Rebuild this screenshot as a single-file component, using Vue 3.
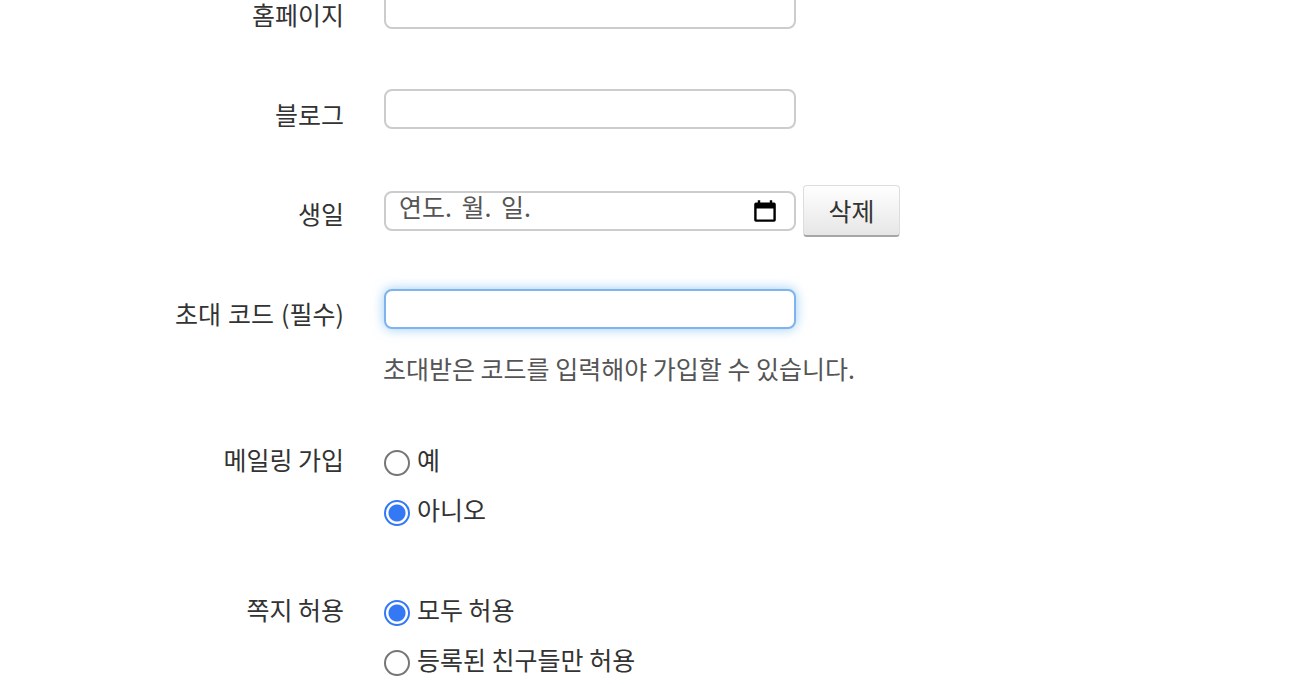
<script setup>
const calendarPath = 'M3 1h2v2h8V1h2v2h1.5A1.5 1.5 0 0 1 18 4.5v13a1.5 1.5 0 0 1-1.5 1.5h-15A1.5 1.5 0 0 1 0 17.5v-13A1.5 1.5 0 0 1 1.5 3H3V1zM2 8v9h14V8H2z'

const mailing = [
  { label: '예', checked: false },
  { label: '아니오', checked: true },
]
const messages = [
  { label: '모두 허용', checked: true },
  { label: '등록된 친구들만 허용', checked: false },
]
</script>

<template>
  <form class="signup" @submit.prevent>
    <div class="signup__row signup__row--first">
      <label class="signup__label">홈페이지</label>
      <div class="signup__field"><input class="signup__input" type="text" /></div>
    </div>

    <div class="signup__row signup__row--blog">
      <label class="signup__label">블로그</label>
      <div class="signup__field"><input class="signup__input" type="text" /></div>
    </div>

    <div class="signup__row signup__row--birthday">
      <label class="signup__label">생일</label>
      <div class="signup__field signup__field--inline">
        <div class="signup__date">
          <span>연도. 월. 일.</span>
          <svg class="signup__calendar" viewBox="0 0 18 20" width="22" height="24" aria-hidden="true">
            <path :d="calendarPath" fill-rule="evenodd" />
          </svg>
        </div>
        <button type="button" class="signup__button">삭제</button>
      </div>
    </div>

    <div class="signup__row signup__row--code">
      <label class="signup__label">초대 코드 (필수)</label>
      <div class="signup__field">
        <input class="signup__input signup__input--focus" type="text" />
        <p class="signup__help">초대받은 코드를 입력해야 가입할 수 있습니다.</p>
      </div>
    </div>

    <div class="signup__row signup__row--mailing">
      <label class="signup__label signup__label--radio">메일링 가입</label>
      <div class="signup__field signup__radios">
        <label v-for="item in mailing" :key="item.label" class="signup__radio">
          <input type="radio" name="mailing" :checked="item.checked" />
          <span>{{ item.label }}</span>
        </label>
      </div>
    </div>

    <div class="signup__row signup__row--messages">
      <label class="signup__label signup__label--radio">쪽지 허용</label>
      <div class="signup__field signup__radios">
        <label v-for="item in messages" :key="item.label" class="signup__radio">
          <input type="radio" name="messages" :checked="item.checked" />
          <span>{{ item.label }}</span>
        </label>
      </div>
    </div>
  </form>
</template>

<style>
html,
body {
  margin: 0;
  height: 684px;
  overflow: hidden;
  background: #fff;
}
</style>

<style scoped>
.signup {
  display: flex;
  flex-direction: column;
  margin-top: -11px;
  font-family: "Noto Sans CJK KR", "Liberation Sans", sans-serif;
  font-size: 25px;
  line-height: 40px;
  color: #333;
}

.signup__row {
  display: grid;
  grid-template-columns: 344px 1fr;
  column-gap: 40px;
}

.signup__row--blog {
  margin-top: 55px;
}

.signup__row--birthday {
  margin-top: 51px;
}

.signup__row--code {
  margin-top: 52px;
}

.signup__row--mailing {
  margin-top: 51px;
}

.signup__row--messages {
  margin-top: 60px;
}

.signup__label {
  text-align: right;
  padding-top: 5px;
}

.signup__label--radio {
  padding-top: 0;
}

.signup__row--birthday .signup__label {
  padding-top: 8px;
}

.signup__row--code .signup__label {
  padding-top: 4px;
  word-spacing: 1.5px;
}

.signup__field--inline {
  display: flex;
  align-items: center;
  gap: 7px;
}

.signup__input,
.signup__date {
  box-sizing: border-box;
  display: block;
  width: 412px;
  height: 40px;
  margin: 0;
  padding: 0 14px;
  border: 2px solid #ccc;
  border-radius: 8px;
  background: #fff;
  outline: none;
}

.signup__date {
  display: flex;
  align-items: center;
  justify-content: space-between;
  padding-left: 13px;
  color: #555;
  line-height: 32px;
  word-spacing: 4px;
}

.signup__date span {
  margin-top: -10px;
}

.signup__calendar {
  margin-right: 4px;
  fill: #000;
}

.signup__input--focus {
  border-color: #7fb3ee;
  box-shadow: 0 0 12px rgba(82, 168, 236, 0.6);
}

.signup__button {
  box-sizing: border-box;
  width: 97px;
  height: 52px;
  padding: 0 0 2px;
  border: 1px solid #ddd;
  border-bottom: 2px solid #a6a6a6;
  border-radius: 4px;
  background: linear-gradient(#fff, #e6e6e6);
  font: inherit;
  color: #333;
}

.signup__help {
  margin: 19px 0 0 -1px;
  color: #555;
}

.signup__radios {
  display: flex;
  flex-direction: column;
  gap: 10px;
}

.signup__radio {
  display: flex;
  align-items: center;
  gap: 7px;
}

.signup__radio input {
  appearance: none;
  box-sizing: border-box;
  width: 26px;
  height: 26px;
  margin: 8px 0 0;
  border: 2px solid #767676;
  border-radius: 50%;
  background: #fff;
}

.signup__radio input:checked {
  border-color: #3478f6;
  background: radial-gradient(circle, #3478f6 0 8px, #fff 9px);
}
</style>
